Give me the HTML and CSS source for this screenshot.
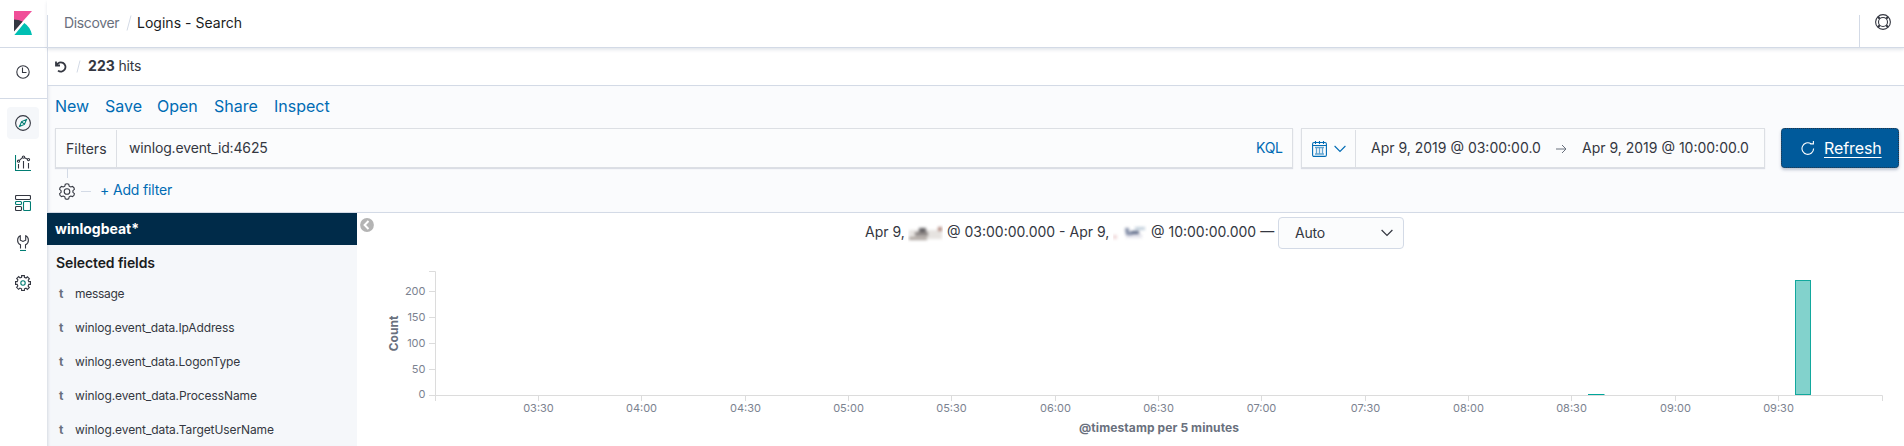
FILE: index.html
```html
<!DOCTYPE html>
<html lang="en">
<head>
<meta charset="utf-8">
<title>Logins - Search</title>
<link rel="stylesheet" href="styles.css">
</head>
<body>
<div class="app">
  <nav class="rail">
    <div class="rail-logo">
      <svg width="18" height="24" viewBox="0 0 18 24"><path fill="#f04e98" d="M0 0h18L0 20z"/><path fill="#343741" d="M0 8.5a21 21 0 0 1 8.6 2L0 20.6z"/><path fill="#00bfb3" d="M10.3 12a18 18 0 0 1 7.7 12H.4z"/></svg>
    </div>
    <div class="rail-recent">
      <svg class="ico" width="16" height="16" viewBox="0 0 16 16"><circle cx="8" cy="8" r="6.2"/><path d="M7.500 3.500v5h4"/></svg>
    </div>
    <div class="rail-items">
      <div class="rail-item active"><svg class="ico" width="16" height="16" viewBox="0 0 16 16"><circle cx="8" cy="8" r="7.400"/><path class="teal" d="M11.500 4.500 9.400 9.400 4.500 11.500 6.600 6.600zM9.200 9.200 6.800 6.800"/></svg></div>
      <div class="rail-item"><svg class="ico" width="16" height="16" viewBox="0 0 16 16"><path class="teal" d="M.5 0v15.500H16"/><path d="M3.500 13.500V9M8.500 13.500V6M13.500 13.500V8M4.400 5.400l3-2.700M9.600 2.700l3 1.600"/><circle cx="3.500" cy="6.200" r="1.100"/><circle cx="8.500" cy="2.100" r="1.100"/><circle cx="13.500" cy="4.600" r="1.100"/></svg></div>
      <div class="rail-item"><svg class="ico" width="16" height="16" viewBox="0 0 16 16"><rect x=".5" y=".5" width="15" height="4" rx="1"/><rect x=".5" y="11.500" width="6" height="4" rx="1"/><rect class="teal" x=".5" y="6.500" width="6" height="3" rx="1"/><rect class="teal" x="8.500" y="6.500" width="7" height="9" rx="1"/></svg></div>
      <div class="rail-item"><svg class="ico" width="16" height="16" viewBox="0 0 16 16"><path d="M5.500 13.500V9.800C1.500 7.800 1.800 2.400 5.300.8v4.400L8 6.500l2.700-1.300V.8c3.500 1.600 3.800 7-.2 9v3.700"/><path class="teal" d="M5 15.500h6"/></svg></div>
      <div class="rail-item"><svg class="ico" width="16" height="16" viewBox="0 0 16 16"><path d="M6.600 2.300V.6h2.800v1.700l1.700.7 1.300-1.200 2 2-1.200 1.300.6 1.500h1.700v2.800h-1.700l-.7 1.700 1.200 1.300-2 2-1.300-1.200-1.600.6v1.700H6.600v-1.700l-1.700-.7-1.300 1.200-2-2 1.200-1.300-.6-1.600H.5V6.600h1.700l.7-1.700-1.200-1.300 2-2L5 2.900z"/><circle class="teal" cx="8" cy="8" r="2.200"/></svg></div>
    </div>
  </nav>

  <div class="page">
    <header class="header">
      <div class="crumbs">
        <span class="crumb">Discover</span>
        <svg class="slash" width="8" height="16" viewBox="0 0 8 16"><path d="M6 .5 2 15.500"/></svg>
        <span class="crumb current">Logins - Search</span>
      </div>
      <div class="help">
        <svg class="ico" width="16" height="16" viewBox="0 0 16 16"><circle cx="8" cy="8" r="7.400"/><circle cx="8" cy="8" r="4.500"/><path class="thick" d="M2.800 2.800 4.800 4.800M13.200 2.800 11.200 4.800M2.800 13.200 4.800 11.200M13.200 13.200 11.200 11.200"/></svg>
      </div>
    </header>

    <div class="hits">
      <svg class="undo" width="12" height="12" viewBox="0 0 12 12"><path d="M1 .6v3.900h4M1.600 4.200A4.600 4.600 0 1 1 3 9.600"/></svg>
      <svg class="slash hits-slash" width="7" height="13" viewBox="0 0 7 13"><path d="M5 .5 2 12.500"/></svg>
      <strong class="hits-count">223</strong><span class="hits-label">hits</span>
    </div>

    <section class="query">
      <div class="menu">
        <a class="m-new">New</a><a class="m-save">Save</a><a class="m-open">Open</a><a class="m-share">Share</a><a class="m-inspect">Inspect</a>
      </div>
      <div class="bar">
        <div class="search">
          <div class="search-label"><span>Filters</span></div>
          <div class="search-text"><span>winlog.event_id:4625</span></div>
          <div class="kql">KQL</div>
        </div>
        <div class="dates">
          <div class="quick">
            <svg class="blue" width="15" height="16" viewBox="0 0 15 16"><rect x=".6" y="1.500" width="13.800" height="13.900" rx="1.400"/><path d="M.6 4.500h13.800M3.500 0v3M7.500 0v3M11.500 0v3"/><path class="soft" d="M4.500 6.500v7M7.500 6.500v7M10.500 6.500v7M3 6.500h9M3 13h9"/></svg>
            <svg class="blue" width="12" height="8" viewBox="0 0 12 8"><path d="m.6 1 5.400 5.500L11.400 1"/></svg>
          </div>
          <span class="date d-from">Apr 9, 2019 @ 03:00:00.0</span>
          <svg class="arrow" width="11" height="10" viewBox="0 0 11 10"><path d="M0 5h10M6 1l4 4-4 4"/></svg>
          <span class="date d-to">Apr 9, 2019 @ 10:00:00.0</span>
        </div>
        <div class="refresh">
          <svg class="white" width="14" height="15" viewBox="0 0 14 15"><path d="M12.600 7.500A5.800 5.800 0 1 1 10 2.700h2.300M12.400 0v3H9.200"/></svg>
          <span>Refresh</span>
        </div>
      </div>
      <div class="filters">
        <svg class="ico gear" width="16" height="17" viewBox="0 0 16 17"><path d="M6.300 1.200Q8 .2 9.700 1.200L10.200 3.200 11.700 4l1.900-.6q1.700.9 1.800 2.900L13.900 7.700v1.600l1.500 1.400q-.1 2-1.800 2.900L11.700 13l-1.500.8-.5 2q-1.700 1-3.400 0l-.5-2L4.300 13l-1.900.6Q.7 12.700.6 10.700L2.100 9.300V7.700L.6 6.300Q.7 4.300 2.400 3.400L4.300 4l1.500-.8z"/><circle cx="8" cy="8.500" r="2.800"/></svg>
        <span class="dash"></span>
        <a class="add">+ Add filter</a>
      </div>
    </section>

    <main class="main">
      <aside class="fields">
        <div class="index">winlogbeat*</div>
        <h2 class="fields-title">Selected fields</h2>
        <ul class="field-list">
          <li><b>t</b><span class="f1">message</span></li>
          <li><b>t</b><span class="f2">winlog.event_data.IpAddress</span></li>
          <li><b>t</b><span class="f3">winlog.event_data.LogonType</span></li>
          <li><b>t</b><span class="f4">winlog.event_data.ProcessName</span></li>
          <li><b>t</b><span class="f5">winlog.event_data.TargetUserName</span></li>
        </ul>
      </aside>
      <section class="result">
        <svg class="collapse" width="14" height="14" viewBox="0 0 14 14"><circle cx="7" cy="7" r="6.900" fill="#b4b4b4"/><path d="M8.500 3 4.600 7l3.900 4" fill="none" stroke="#fff" stroke-width="2"/></svg>
        <div class="range">
          <span class="r1">Apr 9,</span>
          <svg class="smudge s1" width="35" height="24" viewBox="0 0 35 24"><g class="fuzzy"><path fill="#e6e3e0" d="M1 10h33v9H1z"/><path fill="#aaa29c" d="M1 17h18v3H1z"/><path fill="#605d60" d="M11 8h7v8h-7z"/><path fill="#8d8785" d="M7 12h13v4H7z"/><path fill="#b0867c" d="M30 7h4v4h-4z"/></g></svg>
          <span class="r2">@ 03:00:00.000 - Apr 9,</span>
          <svg class="smudge s2" width="34" height="24" viewBox="0 0 34 24"><g class="fuzzy"><path fill="#efd7d8" d="M0 15h4v4H0z"/><path fill="#e4e4ec" d="M13 14h16v4H13z"/><path fill="#7d88a3" d="M12 8h4v4h3v3h-6z"/><path fill="#53607f" d="M18 11h8v3h-8z"/><path fill="#bfcdda" d="M22 7h10v3H22z"/></g></svg>
          <span class="r3">@ 10:00:00.000 —</span>
          <div class="select"><span>Auto</span><svg width="12" height="8" viewBox="0 0 12 8"><path d="m.6 1 5.400 5.500L11.400 1"/></svg></div>
        </div>
        <svg class="chart" width="1547" height="182" viewBox="357 264 1547 182">
          <path class="axis" d="M429 271.500h6.500V401M429 291.500h6M429 317.500h6M429 343.500h6M429 369.500h6M429 395.500h1453.500v5.500M538.500 396v5M641.500 396v5M745.500 396v5M848.500 396v5M951.500 396v5M1055.500 396v5M1158.500 396v5M1261.500 396v5M1365.500 396v5M1468.500 396v5M1571.500 396v5M1675.500 396v5M1778.500 396v5"/>
          <rect class="count-bar" x="1795.500" y="280.500" width="15" height="114"/>
          <path class="count-line" d="M1588 394.500h16.500"/>
          <g class="ylab"><text x="425.500" y="295">200</text><text x="425.500" y="321">150</text><text x="425.500" y="347">100</text><text x="425.500" y="373">50</text><text x="425.500" y="398">0</text></g>
          <g class="xlab"><text x="538.500" y="412">03:30</text><text x="641.500" y="412">04:00</text><text x="745.500" y="412">04:30</text><text x="848.500" y="412">05:00</text><text x="951.500" y="412">05:30</text><text x="1055.500" y="412">06:00</text><text x="1158.500" y="412">06:30</text><text x="1261.500" y="412">07:00</text><text x="1365.500" y="412">07:30</text><text x="1468.500" y="412">08:00</text><text x="1571.500" y="412">08:30</text><text x="1675.500" y="412">09:00</text><text x="1778.500" y="412">09:30</text></g>
          <text class="title" transform="translate(398 333.500) rotate(-90)">Count</text>
          <text class="title" x="1159" y="432" textLength="160">@timestamp per 5 minutes</text>
        </svg>
      </section>
    </main>
  </div>
</div>
</body>
</html>
```

FILE: styles.css
```css
* { box-sizing: border-box; }
body { margin: 0; height: 446px; overflow: hidden; background: #fff; color: #343741; font: 14px/20px Inter, "Liberation Sans", sans-serif; }
svg { display: block; flex: none; fill: none; }
span, a, strong { white-space: nowrap; }
.app { display: flex; height: 446px; }
.rail { width: 47px; flex: none; }
.rail-logo { height: 48px; border-bottom: 1px solid #d3dae6; padding: 11px 0 0 14px; }
.rail-recent { height: 51px; border-bottom: 1px solid #d3dae6; padding: 16px 0 0 14.5px; }
.rail-items { display: flex; flex-direction: column; gap: 8px; padding: 8px 0 0 7px; }
.rail-item { width: 32px; height: 32px; padding: 8px; border-radius: 4px; }
.rail-item.active { background: #f5f7fa; }
.ico { stroke: #343741; stroke-width: 1.100; }
.ico .teal { stroke: #017d73; }
.ico .thick { stroke-width: 2; }
.page { flex: 1; min-width: 0; display: flex; flex-direction: column; }
.header { height: 48px; flex: none; border-bottom: 1px solid #d3dae6; display: flex; justify-content: space-between; align-items: flex-end; box-shadow: 0 2px 3px rgba(90,105,135,.16); position: relative; }
.crumbs { height: 32px; border-left: 1px solid #d3dae6; padding-left: 16px; display: flex; align-items: flex-start; }
.crumb { color: #69707d; width: 56px; margin-top: -2px; letter-spacing: -.35px; }
.crumb.current { color: #1a1c21; width: auto; margin-left: 4px; letter-spacing: .02px; }
.slash { stroke: #d3dae6; margin: 0 0 0 5px; }
.help { height: 32px; width: 45px; border-left: 1px solid #d3dae6; padding-left: 15px; }
.help svg { margin-top: -1px; }
.hits { height: 38px; flex: none; border-bottom: 1px solid #d3dae6; border-left: 1px solid #d9dee8; padding: 0 0 2px 7px; display: flex; align-items: center; }
.undo { stroke: #343741; stroke-width: 1.800; margin-top: 2px; }
.hits-slash { margin: 1px 6px 0 8px; }
.hits-count { width: 30.500px; font-weight: 700; letter-spacing: .1px; }
.hits-label { letter-spacing: -.2px; }
.query { height: 127px; flex: none; background: #fafbfd; border-bottom: 1px solid #d3dae6; border-left: 1px solid #d9dee8; box-shadow: inset 3px 0 3px -2px rgba(90,105,135,.12); }
.menu { display: flex; height: 42px; padding: 9px 0 0 7px; font-size: 16px; line-height: 22px; color: #006bb4; }
.m-new { width: 50px; } .m-save { width: 52px; } .m-open { width: 57px; } .m-share { width: 60px; }
.bar { display: flex; height: 40px; padding-left: 7px; }
.search { width: 1238px; height: 40px; border: 1px solid #dcdfe4; display: flex; background: #fbfcfd; box-shadow: 0 1px 1px rgba(90,105,135,.2); }
.search-label { width: 61px; border-right: 1px solid #dcdfe4; margin-top: 1px; padding: 9px 0 0 10px; }
.search-text { flex: 1; padding: 9px 0 0 12px; letter-spacing: -.15px; }
.kql { width: 36px; padding-top: 9px; color: #006bb4; letter-spacing: -.3px; }
.dates { margin-left: 8px; width: 464px; height: 40px; border: 1px solid #dcdfe4; display: flex; background: #fbfcfd; box-shadow: 0 1px 1px rgba(90,105,135,.2); }
.quick { width: 54px; border-right: 1px solid #dcdfe4; margin-top: 1px; display: flex; gap: 7px; align-items: center; padding-left: 10px; }
.blue { stroke: #006bb4; stroke-width: 1.100; }
.blue .soft { stroke: #62a4d1; stroke-width: 1.300; }
.date { margin-top: 9px; }
.d-from { margin-left: 15px; width: 185px; }
.arrow { stroke: #69707d; margin-top: 15px; }
.d-to { margin-left: 15px; }
.refresh { margin-left: 16px; width: 118px; height: 40px; background: #005a9b; border: 1px dotted #263445; border-radius: 4px; display: flex; color: #fff; font-size: 16px; box-shadow: 0 2px 3px rgba(50,70,110,.3); padding-left: 19px; }
.white { stroke: #fff; stroke-width: 1.100; margin-top: 12px; }
.refresh span { margin: 9px 0 0 9px; height: 20px; text-decoration: underline; text-underline-offset: 3px; letter-spacing: -.1px; }
.filters { display: flex; margin-left: 19px; padding-top: 0; position: relative; color: #006bb4; }
.filters::before { content: ""; position: absolute; left: 0; top: 0; width: 1px; height: 10px; background: #d3dae6; }
.gear { margin: 15px 0 0 -8px; }
.dash { width: 10px; height: 1px; background: #d3dae6; margin: 23px 9px 0 6px; }
.add { margin-top: 12px; letter-spacing: -.15px; }
.main { display: flex; flex: 1; min-height: 0; }
.fields { width: 310px; flex: none; background: #f5f7fa; box-shadow: inset 3px 0 3px -2px rgba(90,105,135,.2); }
.index { height: 32px; background: #002b49; color: #fff; font-weight: 700; padding: 6px 0 0 8px; }
.fields-title { margin: 8px 0 0 9px; font-size: 14px; line-height: 20px; font-weight: 600; color: #1a1c21; white-space: nowrap; letter-spacing: -.1px; }
.field-list { margin: 4px 0 0; padding: 0; list-style: none; font-size: 12px; }
.field-list li { height: 34px; display: flex; align-items: center; padding-left: 12px; }
.field-list b { color: #69707d; width: 16px; font-weight: 700; }
.f1 { letter-spacing: -.3px; } .f2, .f3 { letter-spacing: -.13px; } .f4 { letter-spacing: -.1px; } .f5 { letter-spacing: -.09px; }
.result { flex: 1; min-width: 0; position: relative; }
.collapse { position: absolute; left: 3px; top: 5px; }
.range { display: flex; height: 51px; padding: 4px 0 0 508px; }
.range > span { margin-top: 5px; }
.r1 { width: 43px; } .r2 { width: 166px; } .r3 { width: 127px; }
.smudge { margin-top: 3px; }
.s1 { margin-right: 4px; } .s2 { margin-right: 4px; }
.fuzzy { filter: blur(1.500px); }
.select { width: 126px; height: 32px; border: 1px solid #d3dae6; border-radius: 4px; background: #fbfcfd; display: flex; justify-content: space-between; padding: 5px 10px 0 16px; }
.select span { letter-spacing: -.2px; }
.select svg { stroke: #343741; stroke-width: 1.200; margin-top: 6px; }
.axis { stroke: #dcdcdc; }
.count-bar { fill: #82d2cc; stroke: #12a89d; }
.count-line { stroke: #00a69b; }
.ylab, .xlab { fill: #7b8290; font-size: 11px; }
.ylab { text-anchor: end; }
.xlab { text-anchor: middle; }
.title { fill: #69707d; font-size: 12px; font-weight: 700; text-anchor: middle; }
```
